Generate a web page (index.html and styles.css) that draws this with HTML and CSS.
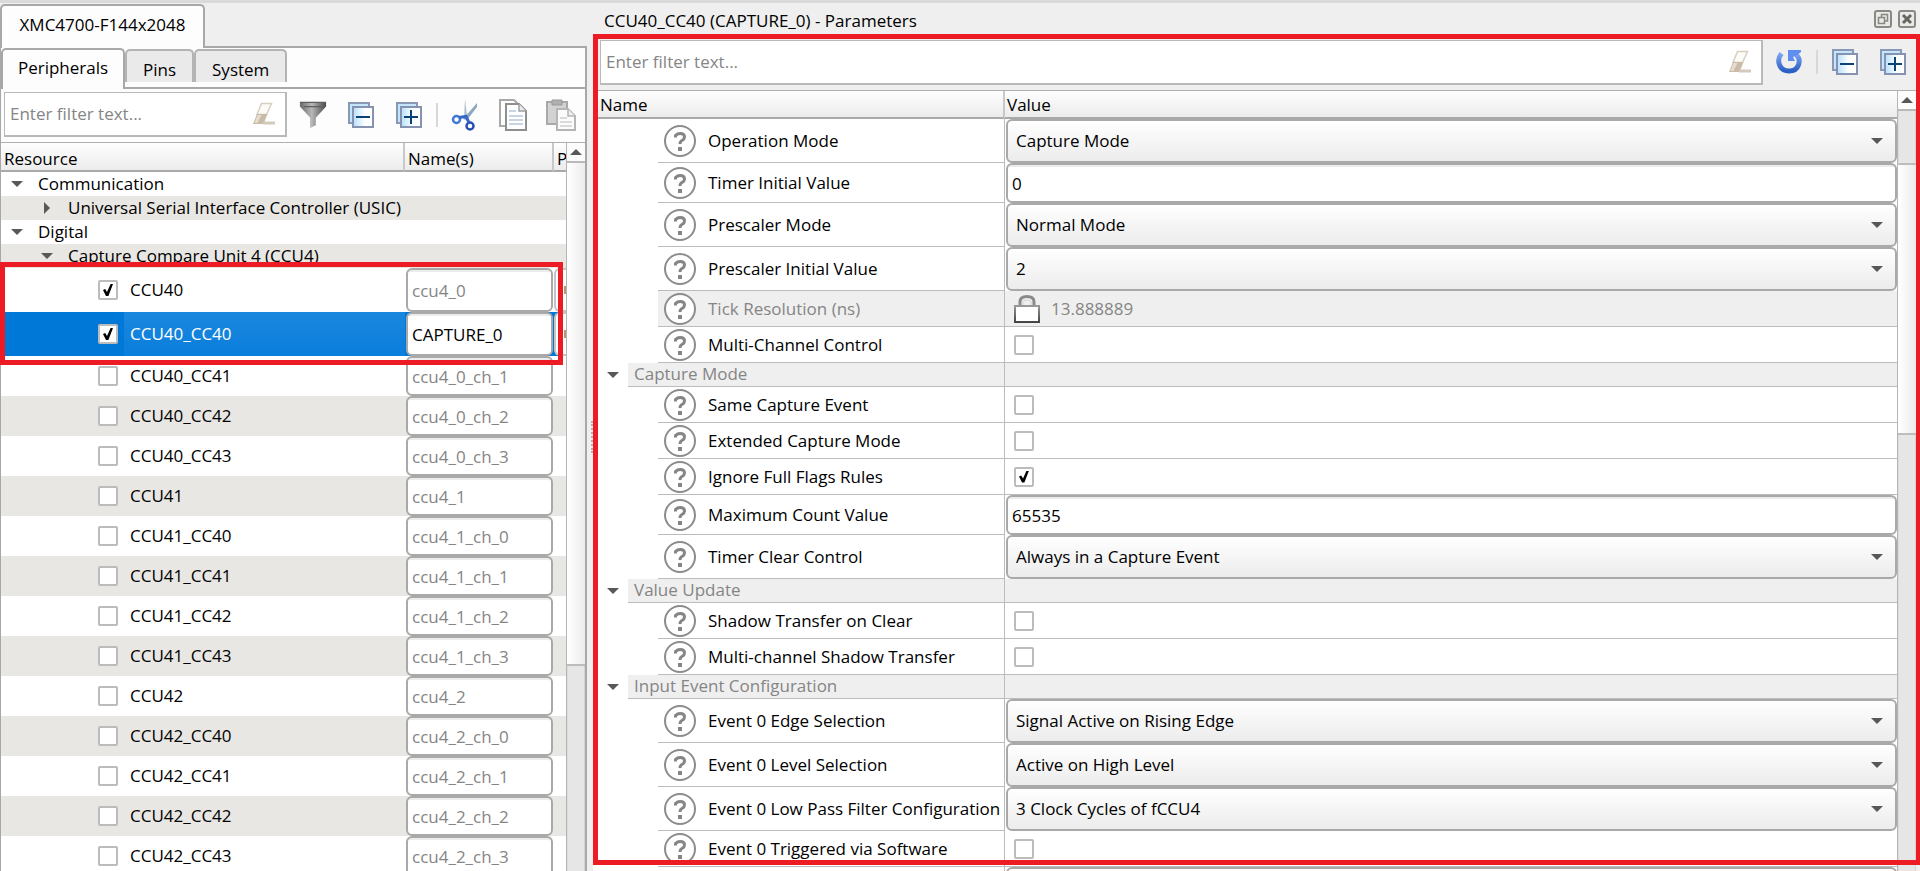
FILE: index.html
```
<!DOCTYPE html>
<html lang="en">
<head>
<meta charset="utf-8">
<title>CCU40_CC40 (CAPTURE_0) - Parameters</title>
<link rel="stylesheet" href="styles.css">
</head>
<body>
<svg class="defs" aria-hidden="true">
  <defs>
    <linearGradient id="g-funnel"><stop offset="0" stop-color="#6a6a6a"/><stop offset=".45" stop-color="#b8b8b8"/><stop offset="1" stop-color="#4a4a4a"/></linearGradient>
    <linearGradient id="g-sheet"><stop offset="0" stop-color="#b5e0fc"/><stop offset=".6" stop-color="#ffffff"/></linearGradient>
    <linearGradient id="g-blue" x2="0" y2="1"><stop offset="0" stop-color="#7fa6f2"/><stop offset="1" stop-color="#2b5fc4"/></linearGradient>
    <linearGradient id="g-lock" x2="0" y2="1"><stop offset="0" stop-color="#999"/><stop offset="1" stop-color="#444"/></linearGradient>
    <symbol id="eraser" viewBox="0 0 24 24"><path d="M9.500 1.500h10l-5 11H5z" fill="#fdfbf7" stroke="#d8d0bf" stroke-width="1.500"/><path d="M5 12h10.500l-4 10H1z" fill="#c9bba6"/><path d="M5.500 13h4l-4 8H2.500z" fill="#e6ddd0"/><path d="M11 21h12" stroke="#d3cabb" stroke-width="3"/></symbol>
    <symbol id="funnel" viewBox="0 0 30 30"><path d="M1 1h28v5L18 18v8l-6 3V18L1 6z" fill="url(#g-funnel)"/><path d="M1 1.500h28M5 6h20" stroke="#5d5d5d" stroke-width="1.500"/></symbol>
    <symbol id="collapse" viewBox="0 0 26 26"><path d="M1 1h20v20H1z" fill="#c3e6fb" stroke="#8b98b5" stroke-width="2"/><path d="M5 5h20v20H5z" fill="url(#g-sheet)" stroke="#8593b0" stroke-width="2"/><path d="M8 15h14" stroke="#0a4278" stroke-width="2"/></symbol>
    <symbol id="expand" viewBox="0 0 26 26"><path d="M1 1h20v20H1z" fill="#c3e6fb" stroke="#8b98b5" stroke-width="2"/><path d="M5 5h20v20H5z" fill="url(#g-sheet)" stroke="#8593b0" stroke-width="2"/><path d="M8 15h14M15 8v14" stroke="#0a4278" stroke-width="2"/></symbol>
    <symbol id="cut" viewBox="0 0 28 32"><path d="M14 0l2 17-3 4z" fill="#a9bdcf"/><path d="M26 4L12 20l4 1L26 8z" fill="#8ea7bf"/><circle cx="5.500" cy="20.500" r="3.500" fill="none" stroke="#3f78d6" stroke-width="2.500"/><circle cx="19" cy="27" r="3.500" fill="none" stroke="#2850b4" stroke-width="2.500"/><path d="M8 18.500l7-1 3 6" fill="none" stroke="#3566c8" stroke-width="3"/></symbol>
    <symbol id="copy" viewBox="0 0 28 32"><path d="M1 1h14l4 4v22H1z" fill="#fff" stroke="#a9a9a9" stroke-width="2"/><path d="M7 5h13l7 7v19H7z" fill="#fff" stroke="#8f8f8f" stroke-width="2"/><path d="M20 5v7h7" fill="#eee" stroke="#a0a0a0" stroke-width="1.500"/><path d="M10 12h7M10 17h14M10 21h14M10 25h14" stroke="#b4c6da" stroke-width="1.500"/></symbol>
    <symbol id="paste" viewBox="0 0 30 32"><path d="M1 3h20v22H1z" fill="#d2d2d2" stroke="#a9a9a9" stroke-width="2"/><path d="M6 1h10v5H6z" fill="#b0b0b0" stroke="#999"/><path d="M11 10h11l7 7v14H11z" fill="#fbfbfb" stroke="#b5b5b5" stroke-width="2"/><path d="M22 10v7h7" fill="#eee" stroke="#b5b5b5" stroke-width="1.500"/><path d="M14 19h7M14 23h12M14 27h12" stroke="#cfcfcf" stroke-width="1.500"/></symbol>
    <symbol id="reset" viewBox="0 0 26 24"><path d="M5.500 3.500C0 10 3 21 13 21S26 10 20 4.500" fill="none" stroke="url(#g-blue)" stroke-width="5"/><path d="M12 0h13v2l-4 3-4 2 2 4h-7z" fill="#5f8df0"/></symbol>
    <symbol id="help" viewBox="0 0 32 32"><circle cx="16" cy="16" r="15" fill="#fff" stroke="#8c8c8c" stroke-width="2"/><path d="M11.500 12.500V10.500q2-2 4.500-2 4.500 0 4.500 3.500 0 2-2.500 3.500-2 1-2 3.500" fill="none" stroke="#858585" stroke-width="3"/><path d="M14 22h4v4h-4z" fill="#858585"/></symbol>
    <symbol id="lock" viewBox="0 0 26 28"><path d="M6 11V7q0-5.500 7-5.500T20 7v4" fill="none" stroke="#8a8a8a" stroke-width="3"/><path d="M9 10V8q0-3 4-3t4 3v2" fill="none" stroke="#ddd" stroke-width="1.500"/><rect x="1" y="11" width="24" height="16" fill="#fff" stroke="url(#g-lock)" stroke-width="2"/></symbol>
    <symbol id="float" viewBox="0 0 18 18"><rect x="1" y="1" width="16" height="16" rx="2" fill="#e9e9e7" stroke="#8a8983" stroke-width="2"/><path d="M7.500 7V4.500h6V11H11M4.500 7.500h6v6h-6z" fill="none" stroke="#87867f" stroke-width="1.500"/></symbol>
    <symbol id="close" viewBox="0 0 18 18"><rect x="1" y="1" width="16" height="16" rx="2" fill="#e9e9e7" stroke="#8a8983" stroke-width="2"/><path d="M5 5l8 8M13 5l-8 8" stroke="#66655f" stroke-width="3"/></symbol>
  </defs>
</svg>
<main class="app">
  <section class="resources">
    <div class="device-tabs" role="tablist"><button class="tab device active" role="tab">XMC4700-F144x2048</button></div>
    <div class="frame">
      <div class="view-tabs" role="tablist">
        <button class="tab active" role="tab">Peripherals</button><button class="tab" role="tab">Pins</button><button class="tab" role="tab">System</button>
      </div>
      <div class="toolbar">
        <div class="filter"><input type="text" placeholder="Enter filter text..." aria-label="Filter resources"><button class="clear" aria-label="Clear filter"><svg width="24" height="24"><use href="#eraser"/></svg></button></div>
        <button class="tool" aria-label="Filter"><svg width="28" height="28"><use href="#funnel"/></svg></button>
        <button class="tool" aria-label="Collapse all"><svg width="26" height="26"><use href="#collapse"/></svg></button>
        <button class="tool" aria-label="Expand all"><svg width="26" height="26"><use href="#expand"/></svg></button>
        <span class="sep"></span>
        <button class="tool" aria-label="Cut"><svg width="28" height="32"><use href="#cut"/></svg></button>
        <button class="tool" aria-label="Copy"><svg width="28" height="32"><use href="#copy"/></svg></button>
        <button class="tool" aria-label="Paste"><svg width="30" height="32"><use href="#paste"/></svg></button>
      </div>
      <div class="scroller">
        <div class="view">
          <table class="tree">
            <colgroup><col><col class="c-name"><col class="c-pers"></colgroup>
            <thead><tr><th>Resource</th><th>Name(s)</th><th>P</th></tr></thead>
            <tbody>
              <tr class="group"><td colspan="3"><div class="node l0"><button class="twist open" aria-label="Collapse"></button>Communication</div></td></tr>
              <tr class="group"><td colspan="3"><div class="node l1"><button class="twist" aria-label="Expand"></button>Universal Serial Interface Controller (USIC)</div></td></tr>
              <tr class="group"><td colspan="3"><div class="node l0"><button class="twist open" aria-label="Collapse"></button>Digital</div></td></tr>
              <tr class="group"><td colspan="3"><div class="node l1"><button class="twist open" aria-label="Collapse"></button>Capture Compare Unit 4 (CCU4)</div></td></tr>
              <tr class="tall"><td><label class="node l2"><input type="checkbox" checked><span>CCU40</span></label></td><td><input class="field dim" value="ccu4_0" aria-label="CCU40 name"></td><td><div class="peek"></div></td></tr>
              <tr class="tall selected"><td><label class="node l2"><input type="checkbox" checked><span>CCU40_CC40</span></label></td><td><input class="field" value="CAPTURE_0" aria-label="CCU40_CC40 name"></td><td><div class="peek"></div></td></tr>
              <tr><td><label class="node l2"><input type="checkbox"><span>CCU40_CC41</span></label></td><td><input class="field dim" value="ccu4_0_ch_1" aria-label="CCU40_CC41 name"></td><td></td></tr>
              <tr><td><label class="node l2"><input type="checkbox"><span>CCU40_CC42</span></label></td><td><input class="field dim" value="ccu4_0_ch_2" aria-label="CCU40_CC42 name"></td><td></td></tr>
              <tr><td><label class="node l2"><input type="checkbox"><span>CCU40_CC43</span></label></td><td><input class="field dim" value="ccu4_0_ch_3" aria-label="CCU40_CC43 name"></td><td></td></tr>
              <tr><td><label class="node l2"><input type="checkbox"><span>CCU41</span></label></td><td><input class="field dim" value="ccu4_1" aria-label="CCU41 name"></td><td></td></tr>
              <tr><td><label class="node l2"><input type="checkbox"><span>CCU41_CC40</span></label></td><td><input class="field dim" value="ccu4_1_ch_0" aria-label="CCU41_CC40 name"></td><td></td></tr>
              <tr><td><label class="node l2"><input type="checkbox"><span>CCU41_CC41</span></label></td><td><input class="field dim" value="ccu4_1_ch_1" aria-label="CCU41_CC41 name"></td><td></td></tr>
              <tr><td><label class="node l2"><input type="checkbox"><span>CCU41_CC42</span></label></td><td><input class="field dim" value="ccu4_1_ch_2" aria-label="CCU41_CC42 name"></td><td></td></tr>
              <tr><td><label class="node l2"><input type="checkbox"><span>CCU41_CC43</span></label></td><td><input class="field dim" value="ccu4_1_ch_3" aria-label="CCU41_CC43 name"></td><td></td></tr>
              <tr><td><label class="node l2"><input type="checkbox"><span>CCU42</span></label></td><td><input class="field dim" value="ccu4_2" aria-label="CCU42 name"></td><td></td></tr>
              <tr><td><label class="node l2"><input type="checkbox"><span>CCU42_CC40</span></label></td><td><input class="field dim" value="ccu4_2_ch_0" aria-label="CCU42_CC40 name"></td><td></td></tr>
              <tr><td><label class="node l2"><input type="checkbox"><span>CCU42_CC41</span></label></td><td><input class="field dim" value="ccu4_2_ch_1" aria-label="CCU42_CC41 name"></td><td></td></tr>
              <tr><td><label class="node l2"><input type="checkbox"><span>CCU42_CC42</span></label></td><td><input class="field dim" value="ccu4_2_ch_2" aria-label="CCU42_CC42 name"></td><td></td></tr>
              <tr><td><label class="node l2"><input type="checkbox"><span>CCU42_CC43</span></label></td><td><input class="field dim" value="ccu4_2_ch_3" aria-label="CCU42_CC43 name"></td><td></td></tr>
            </tbody>
          </table>
        </div>
        <div class="bar"><div class="up"></div><div class="trough left-trough"></div><div class="thumb"></div></div>
      </div>
    </div>
    <div class="mark mark-rows"></div>
  </section>
  <div class="splitter"><span></span></div>
  <section class="parameters">
    <header class="title"><h1>CCU40_CC40 (CAPTURE_0) - Parameters</h1><button aria-label="Float"><svg width="18" height="18"><use href="#float"/></svg></button><button aria-label="Close"><svg width="18" height="18"><use href="#close"/></svg></button></header>
    <div class="toolbar">
      <div class="filter"><input type="text" placeholder="Enter filter text..." aria-label="Filter parameters"><button class="clear" aria-label="Clear filter"><svg width="24" height="24"><use href="#eraser"/></svg></button></div>
      <button class="tool" aria-label="Reset"><svg width="26" height="24"><use href="#reset"/></svg></button>
      <span class="sep"></span>
      <button class="tool" aria-label="Collapse all"><svg width="26" height="26"><use href="#collapse"/></svg></button>
      <button class="tool" aria-label="Expand all"><svg width="26" height="26"><use href="#expand"/></svg></button>
    </div>
    <div class="scroller">
      <div class="view">
        <table class="params">
          <colgroup><col class="c-label"><col></colgroup>
          <thead><tr><th>Name</th><th>Value</th></tr></thead>
          <tbody>
            <tr class="tall"><td><div class="name"><svg><use href="#help"/></svg><label for="p1">Operation Mode</label></div></td><td><div class="combo"><select id="p1"><option>Capture Mode</option></select></div></td></tr>
            <tr class="edit"><td><div class="name"><svg><use href="#help"/></svg><label for="p2">Timer Initial Value</label></div></td><td><input class="field" id="p2" value="0"></td></tr>
            <tr class="tall"><td><div class="name"><svg><use href="#help"/></svg><label for="p3">Prescaler Mode</label></div></td><td><div class="combo"><select id="p3"><option>Normal Mode</option></select></div></td></tr>
            <tr class="tall"><td><div class="name"><svg><use href="#help"/></svg><label for="p4">Prescaler Initial Value</label></div></td><td><div class="combo"><select id="p4"><option>2</option></select></div></td></tr>
            <tr class="locked"><td><div class="name"><svg><use href="#help"/></svg><span>Tick Resolution (ns)</span></div></td><td><div class="value"><svg width="26" height="28"><use href="#lock"/></svg>13.888889</div></td></tr>
            <tr><td><div class="name"><svg><use href="#help"/></svg><label for="p6">Multi-Channel Control</label></div></td><td><div class="value"><input type="checkbox" id="p6"></div></td></tr>
            <tr class="section"><td><div class="group-name"><button class="twist open" aria-label="Collapse"></button><span>Capture Mode</span></div></td><td></td></tr>
            <tr><td><div class="name"><svg><use href="#help"/></svg><label for="p7">Same Capture Event</label></div></td><td><div class="value"><input type="checkbox" id="p7"></div></td></tr>
            <tr><td><div class="name"><svg><use href="#help"/></svg><label for="p8">Extended Capture Mode</label></div></td><td><div class="value"><input type="checkbox" id="p8"></div></td></tr>
            <tr><td><div class="name"><svg><use href="#help"/></svg><label for="p9">Ignore Full Flags Rules</label></div></td><td><div class="value"><input type="checkbox" id="p9" checked></div></td></tr>
            <tr class="edit"><td><div class="name"><svg><use href="#help"/></svg><label for="p10">Maximum Count Value</label></div></td><td><input class="field" id="p10" value="65535"></td></tr>
            <tr class="tall"><td><div class="name"><svg><use href="#help"/></svg><label for="p11">Timer Clear Control</label></div></td><td><div class="combo"><select id="p11"><option>Always in a Capture Event</option></select></div></td></tr>
            <tr class="section"><td><div class="group-name"><button class="twist open" aria-label="Collapse"></button><span>Value Update</span></div></td><td></td></tr>
            <tr><td><div class="name"><svg><use href="#help"/></svg><label for="p12">Shadow Transfer on Clear</label></div></td><td><div class="value"><input type="checkbox" id="p12"></div></td></tr>
            <tr><td><div class="name"><svg><use href="#help"/></svg><label for="p13">Multi-channel Shadow Transfer</label></div></td><td><div class="value"><input type="checkbox" id="p13"></div></td></tr>
            <tr class="section"><td><div class="group-name"><button class="twist open" aria-label="Collapse"></button><span>Input Event Configuration</span></div></td><td></td></tr>
            <tr class="tall"><td><div class="name"><svg><use href="#help"/></svg><label for="p14">Event 0 Edge Selection</label></div></td><td><div class="combo"><select id="p14"><option>Signal Active on Rising Edge</option></select></div></td></tr>
            <tr class="tall"><td><div class="name"><svg><use href="#help"/></svg><label for="p15">Event 0 Level Selection</label></div></td><td><div class="combo"><select id="p15"><option>Active on High Level</option></select></div></td></tr>
            <tr class="tall"><td><div class="name"><svg><use href="#help"/></svg><label for="p16">Event 0 Low Pass Filter Configuration</label></div></td><td><div class="combo"><select id="p16"><option>3 Clock Cycles of fCCU4</option></select></div></td></tr>
            <tr><td><div class="name"><svg><use href="#help"/></svg><label for="p17">Event 0 Triggered via Software</label></div></td><td><div class="value"><input type="checkbox" id="p17"></div></td></tr>
            <tr class="tall"><td></td><td><div class="combo"><select aria-label="Next parameter"></select></div></td></tr>
          </tbody>
        </table>
      </div>
      <div class="bar"><div class="up"></div><div class="thumb small"></div><div class="trough right-trough"></div><div class="thumb"></div></div>
    </div>
    <div class="mark mark-panel"></div>
  </section>
</main>
</body>
</html>
```
FILE: styles.css
```
* { box-sizing: border-box; }
body {
  margin: 0;
  height: 100vh;
  overflow: hidden;
  background: #efefef;
  color: #000;
  font-family: "Open Sans", "Noto Sans", sans-serif;
  font-size: 17px;
  line-height: 22px;
}
button, input, select { font: inherit; color: inherit; margin: 0; }
button { padding: 0; border: 0; background: none; }
.defs { position: absolute; width: 0; height: 0; }

.app {
  height: 100%;
  display: grid;
  grid-template-columns: 587px 6px minmax(0, 1fr);
  border-top: 3px solid #dadada;
}
.resources, .parameters {
  position: relative;
  display: flex;
  flex-direction: column;
  min-height: 0;
  min-width: 0;
}

/* tabs */
.device-tabs { display: flex; height: 43px; padding-top: 1px; }
.tab {
  padding: 6px 16px 0;
  border: 2px solid #b4b4b4;
  border-bottom: 0;
  border-radius: 5px 5px 0 0;
  background: #eaeaea;
}
.tab.active { background: #fdfdfd; border-color: #a8a8a8; position: relative; }
.tab.device { width: 205px; height: 44px; padding: 0 0 4px; }
.frame {
  flex: 1;
  min-height: 0;
  display: flex;
  flex-direction: column;
  border: 1px solid #a8a8a8;
  border-width: 2px 2px 0 1px;
  background: #fdfdfd;
}
.view-tabs { display: flex; align-items: flex-end; height: 41px; border-bottom: 2px solid #a8a8a8; }
.view-tabs .tab { height: 33px; margin-bottom: 5px; }
.view-tabs .tab.active { height: 41px; margin-bottom: -2px; width: 124px; padding: 0 0 4px; }

/* toolbars */
.toolbar { display: flex; align-items: center; height: 53px; }
.resources .toolbar { padding: 0 0 2px 3px; }
.parameters .toolbar { height: 50px; padding: 0 3px 0 7px; align-items: flex-start; }
.filter {
  flex: 1;
  min-width: 0;
  height: 45px;
  margin-right: 2px;
  display: flex;
  align-items: center;
  padding: 0 9px 0 5px;
  border: 2px solid #b9b9b9;
  border-width: 1px 2px 2px 1px;
  background: #fff;
}
.filter input { flex: 1; min-width: 0; border: 0; padding: 0; outline: 0; background: none; }
.filter input::placeholder { color: #858585; opacity: 1; }
.clear, .tool { display: flex; align-items: center; justify-content: center; }
.tool { width: 48px; height: 44px; }
.sep { width: 2px; height: 24px; margin: 0 3px; background: #d8d8d8; }
.parameters .sep { margin-top: 10px; }

/* scrolling areas */
.scroller { flex: 1; min-height: 0; display: flex; border-top: 1px solid #b0b0b0; background: #fff; }
.view { flex: 1; min-width: 0; overflow: hidden; }
.bar { width: 19px; display: flex; flex-direction: column; border-left: 1px solid #b5b5b5; }
.up { height: 20px; display: flex; align-items: center; justify-content: center; background: #fcfcfc; border-bottom: 2px solid #b9b9b9; }
.up::before { content: ""; border: 6px solid transparent; border-top: 0; border-bottom: 6px solid #585858; }
.trough { background: linear-gradient(90deg, #fff, #ececec); border-bottom: 2px solid #bdbdbd; }
.left-trough { flex: 502 0 0; }
.left-trough + .thumb { flex: 205 0 0; }
.right-trough { flex: 270 0 0; }
.right-trough + .thumb { flex: 438 0 0; }
.thumb { background: #e6e6e6; border-left: 1px solid #dcdcdc; border-right: 1px solid #d4d4d4; }
.thumb.small { height: 54px; border-bottom: 2px solid #bdbdbd; }

table { width: 100%; table-layout: fixed; border-spacing: 0; }
td, th { padding: 0; }
th {
  height: 28px;
  padding: 2px 0 0 2px;
  text-align: left;
  font-weight: 400;
  white-space: nowrap;
  overflow: hidden;
  background: linear-gradient(#fefefe, #ececec);
  border-bottom: 2px solid #a9a9a9;
  border-right: 2px solid #c8c8c8;
}
th:last-child { border-right: 0; }
.c-name { width: 149px; }
.c-pers { width: 12px; }

/* resource tree */
.tree th { height: 29px; padding: 4px 0 0 3px; }
.tree td { height: 40px; }
.tree .group td { height: 24px; }
.tree .tall td { height: 44px; }
.tree tbody tr { background: #fff; }
.tree tbody tr:nth-child(even) { background: #e8e7e3; }
.tree tbody tr.selected { background: #0078d7; color: #fff; }
.node { display: flex; align-items: center; gap: 12px; white-space: nowrap; }
.group .node { height: 24px; gap: 0; }
.l0 { padding-left: 4px; }
.l1 { padding-left: 34px; }
.l2 { padding-left: 97px; height: 40px; }
.tall .l2 { height: 44px; }
.selected .l2 { background: linear-gradient(#1a87de, #0a7edc) 123px 50% / 100% 100% no-repeat; }
.twist { width: 24px; height: 22px; margin-right: 9px; display: flex; align-items: center; justify-content: center; }
.twist::before { content: ""; border: 6px solid transparent; border-right: 0; border-left: 6px solid #585858; }
.twist.open::before { border: 6px solid transparent; border-bottom: 0; border-top: 6px solid #585858; }

input[type="checkbox"] {
  appearance: none;
  flex: none;
  width: 20px;
  height: 20px;
  border: 2px solid #bcbcbc;
  border-radius: 2px;
  background: #fff;
  display: flex;
  align-items: center;
  justify-content: center;
}
input[type="checkbox"]:checked::before {
  content: "";
  width: 10px;
  height: 12px;
  background: #000;
  clip-path: polygon(0 50%, 22% 42%, 40% 66%, 76% 0, 100% 0, 54% 100%, 30% 100%);
}
.field {
  display: block;
  width: 100%;
  height: 40px;
  padding: 0 4px;
  border: 2px solid #a9a9a9;
  border-radius: 6px;
  background: linear-gradient(#ececec 2px, #fff 2px);
  color: #000;
}
.tall .field { height: 44px; }
.tree .field { width: 147px; margin-left: 1px; }
.dim { color: #858585; }
.peek {
  height: 44px;
  display: flex;
  align-items: center;
  justify-content: flex-end;
  border: 2px solid #c4c4c4;
  border-right: 0;
  border-radius: 6px 0 0 6px;
  background: #fff;
}
.peek::after { content: ""; width: 2px; height: 8px; background: #b39a72; }

/* splitter */
.splitter { display: flex; align-items: center; justify-content: flex-end; }
.splitter span { height: 32px; border-left: 2px dotted #b0b0b0; }

/* parameters panel */
.title { display: flex; align-items: center; gap: 6px; height: 37px; padding: 0 4px 6px 11px; }
.title h1 { flex: 1; margin: 4px 0 0; font-size: 17px; font-weight: 400; line-height: 22px; }
.title svg { display: block; }
.parameters .scroller { margin-right: 4px; }
.params th:first-child { padding-left: 7px; }
.c-label { width: 412px; }
.params td { height: 36px; }
.params td:first-child { border-right: 1px solid #bcbcbc; }
.params td:last-child { border-bottom: 1px solid #bcbcbc; }
.params .tall td { height: 44px; }
.params .edit td { height: 40px; }
.params .section td { height: 24px; }
.params .tall td:last-child, .params .edit td:last-child { border-bottom: 0; padding-left: 1px; }
.name {
  display: flex;
  align-items: center;
  gap: 12px;
  height: 36px;
  margin-left: 65px;
  padding-left: 6px;
  border-bottom: 1px solid #bcbcbc;
  white-space: nowrap;
}
.tall .name { height: 44px; }
.edit .name { height: 40px; }
.name svg { flex: none; width: 32px; height: 32px; }
.value { display: flex; align-items: center; gap: 11px; padding-left: 9px; }
.locked { color: #858585; }
.locked .name, .locked td:last-child, .section td:last-child { background: #efefef; }
.group-name { display: flex; align-items: center; height: 24px; color: #858585; padding-left: 8px; }
.group-name .twist { margin-right: 3px; }
.group-name span { flex: 1; height: 24px; padding-left: 6px; background: #efefef; border-bottom: 1px solid #bcbcbc; }
.combo { position: relative; }
.combo select {
  display: block;
  appearance: none;
  width: 100%;
  height: 44px;
  padding: 0 32px 0 8px;
  border: 2px solid #a9a9a9;
  border-radius: 6px;
  background: linear-gradient(#fff, #ececec);
}
.combo::after {
  content: "";
  position: absolute;
  right: 14px;
  top: 19px;
  border: 6px solid transparent;
  border-bottom: 0;
  border-top: 6px solid #585858;
  pointer-events: none;
}

/* highlight frames */
.mark { position: absolute; border: 5px solid #ed1c24; pointer-events: none; }
.mark-rows { left: 0; top: 259px; width: 563px; height: 103px; }
.mark-panel { inset: 31px 0 6px 0; border-right-width: 4px; }
```
